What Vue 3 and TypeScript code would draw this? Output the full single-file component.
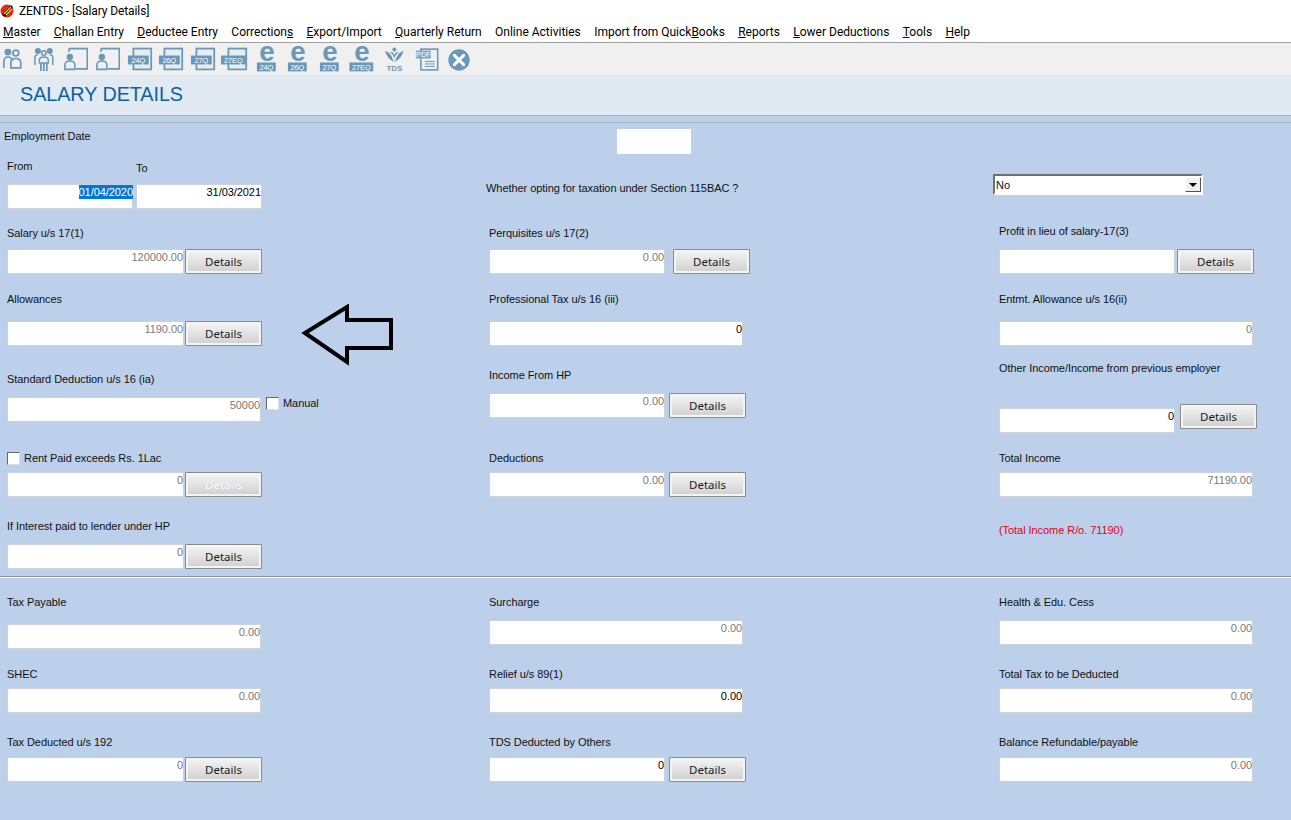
<template>
  <div class="app">
    <!-- Window title -->
    <div class="titlebar">
      <svg class="logo" width="15" height="16" viewBox="0 0 15 16">
        <circle cx="7" cy="9" r="6.5" fill="#e8261c" />
        <path d="M2 13 L11 3 L13 5 L5 15 Z" fill="#111" />
        <path d="M4 12 L11 5 M6 13 L12 7" stroke="#f4d43a" stroke-width="1.2" />
      </svg>
      <span class="title-text">ZENTDS - [Salary Details]</span>
    </div>

    <nav class="menubar">
      <span v-for="item in menu" :key="item.pre + item.key + item.post" class="menu-item">{{ item.pre }}<u>{{ item.key }}</u>{{ item.post }}</span>
    </nav>

    <div class="toolbar">
      <div class="toolbar-row">
        <svg v-for="(icon, i) in toolbar" :key="i" class="tool" viewBox="0 0 32 32">
          <g v-if="icon.type === 'two'" fill="none" stroke="#6a98b9" stroke-width="1.7">
            <circle cx="12" cy="9" r="2.6" fill="#6a98b9" />
            <circle cx="20" cy="10" r="3" />
            <path d="M8 25 V19 Q8 14 12 14 Q16 14 16 18" />
            <path d="M15 25 V20 Q15 15.5 20 15.5 Q25 15.5 25 20 V25 Z" />
          </g>
          <g v-else-if="icon.type === 'group'" fill="none" stroke="#6a98b9" stroke-width="1.5">
            <circle cx="10" cy="8" r="2.3" fill="#6a98b9" />
            <circle cx="16" cy="10" r="2.3" />
            <circle cx="22" cy="8" r="2.3" fill="#6a98b9" />
            <path d="M7 22 V14 Q7 12 10 12 M25 22 V14 Q25 12 22 12" />
            <path d="M11.5 20 V17 Q11.5 14 16 14 Q20.5 14 20.5 17 V20 Z" />
            <path d="M13 20 V28 M16 20 V28 M19 20 V28" stroke-width="1.8" />
          </g>
          <g v-else-if="icon.type === 'person'" fill="none" stroke="#6a98b9" stroke-width="1.6">
            <path d="M10 5.5 H28.5 V26 H17" />
            <path d="M10 5.5 V9" />
            <circle cx="11" cy="14" r="2.4" fill="#6a98b9" />
            <path d="M6 26.5 V22 Q6 18 11 18 Q16 18 16 22 V26.5 Z" />
          </g>
          <g v-else-if="icon.type === 'doc'">
            <rect x="10.5" y="5.5" width="18" height="21" fill="#e7ecf0" stroke="#6a98b9" stroke-width="1.8" />
            <rect :x="icon.label.length > 3 ? 3 : 5" y="12.5" :width="icon.label.length > 3 ? 25 : 21" height="9" fill="#6a98b9" />
            <text x="15.5" y="20" text-anchor="middle" class="tool-text">{{ icon.label }}</text>
          </g>
          <g v-else-if="icon.type === 'e'">
            <text x="17" y="18.5" text-anchor="middle" class="tool-e">e</text>
            <rect :x="icon.label.length > 3 ? 4.5 : 7" y="19.5" :width="icon.label.length > 3 ? 24 : 19" height="9" fill="#6a98b9" />
            <text x="16.5" y="27" text-anchor="middle" class="tool-text">{{ icon.label }}</text>
          </g>
          <g v-else-if="icon.type === 'tds'" fill="#6a98b9">
            <circle cx="18.5" cy="6.5" r="2" />
            <path d="M9 8 Q14 9 16 14 Q17 17 18.5 19 Q12 17 9 8 Z" />
            <path d="M28 8 Q23 9 21 14 Q20 17 18.5 19 Q25 17 28 8 Z" />
            <path d="M14 9 Q16 10 18.5 15 Q21 10 23 9 Q20 8 18.5 12 Q17 8 14 9 Z" />
            <text x="18.5" y="28" text-anchor="middle" class="tool-tds">TDS</text>
          </g>
          <g v-else-if="icon.type === 'pdf'">
            <rect x="13" y="6" width="17" height="21" fill="#edf1f4" stroke="#6a98b9" stroke-width="1.6" />
            <rect x="8" y="7.5" width="15" height="8" fill="#7ea6c3" />
            <text x="15.5" y="14" text-anchor="middle" class="tool-text">PDF</text>
            <path d="M17 18.5 H27 M17 21 H27 M17 23.5 H27" stroke="#6a98b9" stroke-width="1" />
          </g>
          <g v-else>
            <circle cx="19.2" cy="17" r="10.8" fill="#6a98b9" />
            <path d="M14.5 12.3 L23.9 21.7 M23.9 12.3 L14.5 21.7" stroke="#fff" stroke-width="3" stroke-linecap="round" />
          </g>
        </svg>
      </div>
    </div>

    <h1 class="heading">SALARY DETAILS</h1>
    <div class="heading-gap"></div>

    <main class="form">
      <section v-for="sec in sections" :key="sec.name" :class="sec.name">
        <div v-for="col in sec.cols" :key="col.name" class="column">
          <div v-if="col.name === 'date'" class="head-block">
            <div class="employment">Employment Date</div>
            <div class="date-labels">
              <span class="from">From</span>
              <span class="to">To</span>
            </div>
            <div class="dates">
              <div class="box date from-box"><span class="selected">01/04/2020</span></div>
              <div class="box date to-box dark">31/03/2021</div>
            </div>
          </div>
          <div v-else-if="col.name === 'opt'" class="head-block">
            <div class="blank"></div>
            <div class="opt-label">Whether opting for taxation under Section 115BAC ?</div>
          </div>
          <div v-else-if="col.name === 'select'" class="head-block">
            <div class="select">
              <span>No</span>
              <span class="select-btn"><i></i></span>
            </div>
          </div>

          <div v-for="f in col.fields" :key="f.label" class="field" :style="{ marginTop: f.top + 'px' }">
            <div class="label" :class="{ red: f.red }" :style="{ marginBottom: f.gap + 'px' }">
              <span v-if="f.check" class="check rent"></span>{{ f.label }}
            </div>
            <div v-if="f.inputY !== undefined" class="input-row">
              <div class="box" :class="{ dark: f.dark }" :style="{ width: (f.width ?? 254) + 'px' }">{{ f.value }}</div>
              <button
                v-if="f.btn !== undefined"
                class="details"
                :class="{ disabled: f.disabled }"
                :style="{ marginLeft: f.btn + 'px', marginTop: (f.btnUp ?? 0) * -1 + 'px' }"
              >Details</button>
              <template v-if="f.manual">
                <span class="check manual-box"></span>
                <span class="manual">Manual</span>
              </template>
            </div>
          </div>
        </div>

        <!-- Hand-drawn annotation on top of the form -->
        <svg v-if="sec.name === 'upper'" class="arrow" width="100" height="66" viewBox="0 0 100 66">
          <path d="M6 29 L48 3 V16 H92 V44 H48 V58 Z" fill="none" stroke="#000" stroke-width="4" />
        </svg>
      </section>
    </main>
  </div>
</template>

<script setup lang="ts">
interface FieldDef {
  label: string
  labelY: number // centre of the label line
  inputY?: number // top of the input
  value?: string
  width?: number
  btn?: number // gap between input and Details button
  btnUp?: number
  dark?: boolean
  disabled?: boolean
  check?: boolean
  manual?: boolean
  red?: boolean
}

// turn screen positions into flow margins
function place(list: FieldDef[], start: number) {
  let prev = start
  return list.map((f) => {
    const top = f.labelY - 7 - prev
    const gap = f.inputY !== undefined ? f.inputY - f.labelY - 7 : 0
    prev = f.inputY !== undefined ? f.inputY + 25 : f.labelY + 7
    return { ...f, top, gap }
  })
}

const menu = [
  '&Master', '&Challan Entry', '&Deductee Entry', 'Correction&s', '&Export/Import',
  '&Quarterly Return', 'Online Activities', 'Import from Quick&Books', '&Reports',
  '&Lower Deductions', '&Tools', '&Help',
].map((m) => {
  const at = m.indexOf('&')
  if (at < 0) return { pre: m, key: '', post: '' }
  return { pre: m.slice(0, at), key: m[at + 1], post: m.slice(at + 2) }
})

const toolbar = [
  { type: 'two', label: '' },
  { type: 'group', label: '' },
  { type: 'person', label: '' },
  { type: 'person', label: '' },
  { type: 'doc', label: '24Q' },
  { type: 'doc', label: '26Q' },
  { type: 'doc', label: '27Q' },
  { type: 'doc', label: '27EQ' },
  { type: 'e', label: '24Q' },
  { type: 'e', label: '26Q' },
  { type: 'e', label: '27Q' },
  { type: 'e', label: '27EQ' },
  { type: 'tds', label: '' },
  { type: 'pdf', label: '' },
  { type: 'close', label: '' },
]

const sections = [
  {
    name: 'upper',
    cols: [
      {
        name: 'date',
        fields: place([
          { label: 'Salary u/s 17(1)', labelY: 233, inputY: 249, value: '120000.00', width: 177, btn: 1 },
          { label: 'Allowances', labelY: 299, inputY: 321, value: '1190.00', width: 177, btn: 1 },
          { label: 'Standard Deduction u/s 16 (ia)', labelY: 379, inputY: 397, value: '50000', manual: true },
          { label: 'Rent Paid exceeds Rs. 1Lac', labelY: 458, inputY: 472, value: '0', width: 177, btn: 1, disabled: true, check: true },
          { label: 'If Interest paid to lender under HP', labelY: 526, inputY: 544, value: '0', width: 177, btn: 1 },
        ], 209),
      },
      {
        name: 'opt',
        fields: place([
          { label: 'Perquisites u/s 17(2)', labelY: 233, inputY: 249, value: '0.00', width: 176, btn: 8 },
          { label: 'Professional Tax u/s 16 (iii)', labelY: 299, inputY: 321, value: '0', dark: true },
          { label: 'Income From HP', labelY: 375, inputY: 393, value: '0.00', width: 176, btn: 4 },
          { label: 'Deductions', labelY: 458, inputY: 472, value: '0.00', width: 176, btn: 4 },
        ], 209),
      },
      {
        name: 'select',
        fields: place([
          { label: 'Profit in lieu of salary-17(3)', labelY: 231, inputY: 249, value: '', width: 176, btn: 2 },
          { label: 'Entmt. Allowance u/s 16(ii)', labelY: 299, inputY: 321, value: '0' },
          { label: 'Other Income/Income from previous employer', labelY: 368, inputY: 408, value: '0', width: 176, btn: 5, btnUp: 4, dark: true },
          { label: 'Total Income', labelY: 458, inputY: 472, value: '71190.00' },
          { label: '(Total Income R/o. 71190)', labelY: 530, red: true },
        ], 209),
      },
    ],
  },
  {
    name: 'lower',
    cols: [
      {
        name: 'tax',
        fields: place([
          { label: 'Tax Payable', labelY: 602, inputY: 624, value: '0.00' },
          { label: 'SHEC', labelY: 674, inputY: 688, value: '0.00' },
          { label: 'Tax Deducted u/s 192', labelY: 742, inputY: 757, value: '0', width: 177, btn: 1 },
        ], 578),
      },
      {
        name: 'surcharge',
        fields: place([
          { label: 'Surcharge', labelY: 602, inputY: 620, value: '0.00' },
          { label: 'Relief u/s 89(1)', labelY: 674, inputY: 688, value: '0.00', dark: true },
          { label: 'TDS Deducted by Others', labelY: 742, inputY: 757, value: '0', width: 176, btn: 4, dark: true },
        ], 578),
      },
      {
        name: 'cess',
        fields: place([
          { label: 'Health & Edu. Cess', labelY: 602, inputY: 620, value: '0.00' },
          { label: 'Total Tax to be Deducted', labelY: 674, inputY: 688, value: '0.00' },
          { label: 'Balance Refundable/payable', labelY: 742, inputY: 757, value: '0.00' },
        ], 578),
      },
    ],
  },
]
</script>

<style>
html,
body {
  margin: 0;
  background: #bcd0eb;
}
</style>

<style scoped>
.app {
  width: 1291px;
  height: 820px;
  overflow: hidden;
  display: flex;
  flex-direction: column;
  font-family: "Liberation Sans", Arial, sans-serif;
  font-size: 11px;
  letter-spacing: -0.06px;
  color: #111;
}

.titlebar {
  height: 20px;
  background: #fff;
  display: flex;
  align-items: center;
  font-family: Roboto, sans-serif;
  font-size: 12px;
  letter-spacing: -0.1px;
  color: #000;
  flex: none;
}

.logo {
  margin-right: 4px;
}

.title-text {
  padding-top: 2px;
}

.menubar {
  height: 23px;
  box-sizing: border-box;
  background: #fff;
  border-bottom: 1px solid #a0a0a0;
  display: flex;
  align-items: center;
  gap: 13.3px;
  padding: 1px 0 0 3px;
  font-family: Roboto, sans-serif;
  font-size: 12px;
  letter-spacing: 0;
  color: #000;
  flex: none;
}

.toolbar {
  height: 32px;
  background: #f0f0f0;
  flex: none;
}

.toolbar-row {
  display: flex;
  margin-left: -4px;
}

.tool {
  flex: none;
  width: 31.7px;
  min-width: 0;
  height: 32px;
  overflow: visible;
}

.tool-text {
  font-family: "Liberation Sans", sans-serif;
  font-size: 7.5px;
  fill: #fff;
}

.tool-e {
  font-family: "Liberation Sans", sans-serif;
  font-weight: 700;
  font-size: 28px;
  fill: #6a98b9;
}

.tool-tds {
  font-family: "Liberation Sans", sans-serif;
  font-weight: 700;
  font-size: 8px;
  fill: #6a98b9;
}

.heading {
  margin: 0;
  height: 41px;
  flex: none;
  box-sizing: border-box;
  padding: 8px 0 0 20px;
  background: #e1e9f2;
  border-bottom: 1px solid #a9b4c0;
  font-size: 19.8px;
  line-height: 23px;
  font-weight: 400;
  color: #0a62a5;
}

.heading-gap {
  height: 7px;
  flex: none;
  border-bottom: 1px solid #a9b4c0;
  box-shadow: 0 1px 0 #fff;
  box-sizing: border-box;
}

.form {
  flex: 1;
  display: flex;
  flex-direction: column;
  background: #bcd0eb;
}

.upper,
.lower {
  position: relative;
  display: grid;
  grid-template-columns: 482px 510px 1fr;
  padding-left: 7px;
}

.upper {
  height: 453px;
  border-bottom: 1px solid #8d9199;
  box-shadow: 0 1px 0 #fff;
  box-sizing: border-box;
  margin-top: 1px;
}

.lower {
  margin-top: 1px;
}

.column {
  display: flex;
  flex-direction: column;
  align-items: flex-start;
}

.head-block {
  height: 85px;
  flex: none;
  position: relative;
}

.employment {
  margin: 5px 0 0 -3px;
  line-height: 14px;
}

.date-labels {
  position: relative;
  height: 14px;
  margin-top: 16px;
  line-height: 14px;
}

.to {
  position: absolute;
  left: 129px;
  top: 2px;
}

.dates {
  display: flex;
  gap: 3px;
  margin-top: 11px;
}

.box {
  height: 25px;
  box-sizing: border-box;
  background: #fff;
  border: 1px solid #cdd2d8;
  text-align: right;
  padding: 0;
  line-height: 14px;
  color: #7a7a7a;
  white-space: pre;
}

.box.dark {
  color: #000;
}

.date {
  color: #000;
}

.from-box,
.to-box {
  width: 126px;
}

.selected {
  display: inline-block;
  margin-right: -1px;
  background: #0078d7;
  color: #fff;
  height: 14px;
}

.blank {
  width: 74px;
  height: 25px;
  margin: 5px 0 0 128px;
  background: #fff;
}

.opt-label {
  margin: 27px 0 0 -3px;
  line-height: 14px;
  white-space: nowrap;
}

.select {
  position: relative;
  width: 210px;
  height: 21px;
  margin: 50px 0 0 -6px;
  box-sizing: border-box;
  background: #fff;
  border: 2px solid;
  border-color: #6f6f6f #fff #fff #6f6f6f;
  padding-left: 1px;
  line-height: 19px;
}

.select-btn {
  position: absolute;
  right: 0;
  top: 1px;
  width: 16px;
  height: 15px;
  box-sizing: border-box;
  background: #f0f0f0;
  border: 1px solid;
  border-color: #fff #555 #555 #fff;
  display: flex;
  align-items: center;
  justify-content: center;
}

.select-btn i {
  border: 4px solid transparent;
  border-top: 4px solid #000;
  border-bottom: 0;
}

.field {
  flex: none;
}

.label {
  display: flex;
  align-items: center;
  height: 14px;
  line-height: 14px;
  white-space: pre;
}

.label.red {
  color: #ea0020;
}

.input-row {
  display: flex;
  align-items: flex-start;
}

.details {
  width: 77px;
  height: 25px;
  padding: 0;
  box-sizing: border-box;
  border: 1px solid #8b8b8b;
  box-shadow: inset 0 0 0 2px #f4f4f4;
  border-radius: 1px;
  background: linear-gradient(#f5f5f5, #cfcfcf);
  font-family: "Noto Sans", sans-serif;
  font-size: 11.5px;
  color: #1a1a1a;
}

.details.disabled {
  color: #fff;
  text-shadow: 0 0 1px #bbb;
}

.check {
  display: inline-block;
  width: 13px;
  height: 13px;
  box-sizing: border-box;
  background: #fff;
  border: 1px solid;
  border-color: #666 #ddd #ddd #666;
  flex: none;
}

.check.rent {
  margin-right: 4px;
}

.manual-box {
  margin-left: 5px;
}

.manual {
  margin-left: 4px;
  line-height: 13px;
}

.arrow {
  position: absolute;
  left: 299px;
  top: 180px;
}
</style>
